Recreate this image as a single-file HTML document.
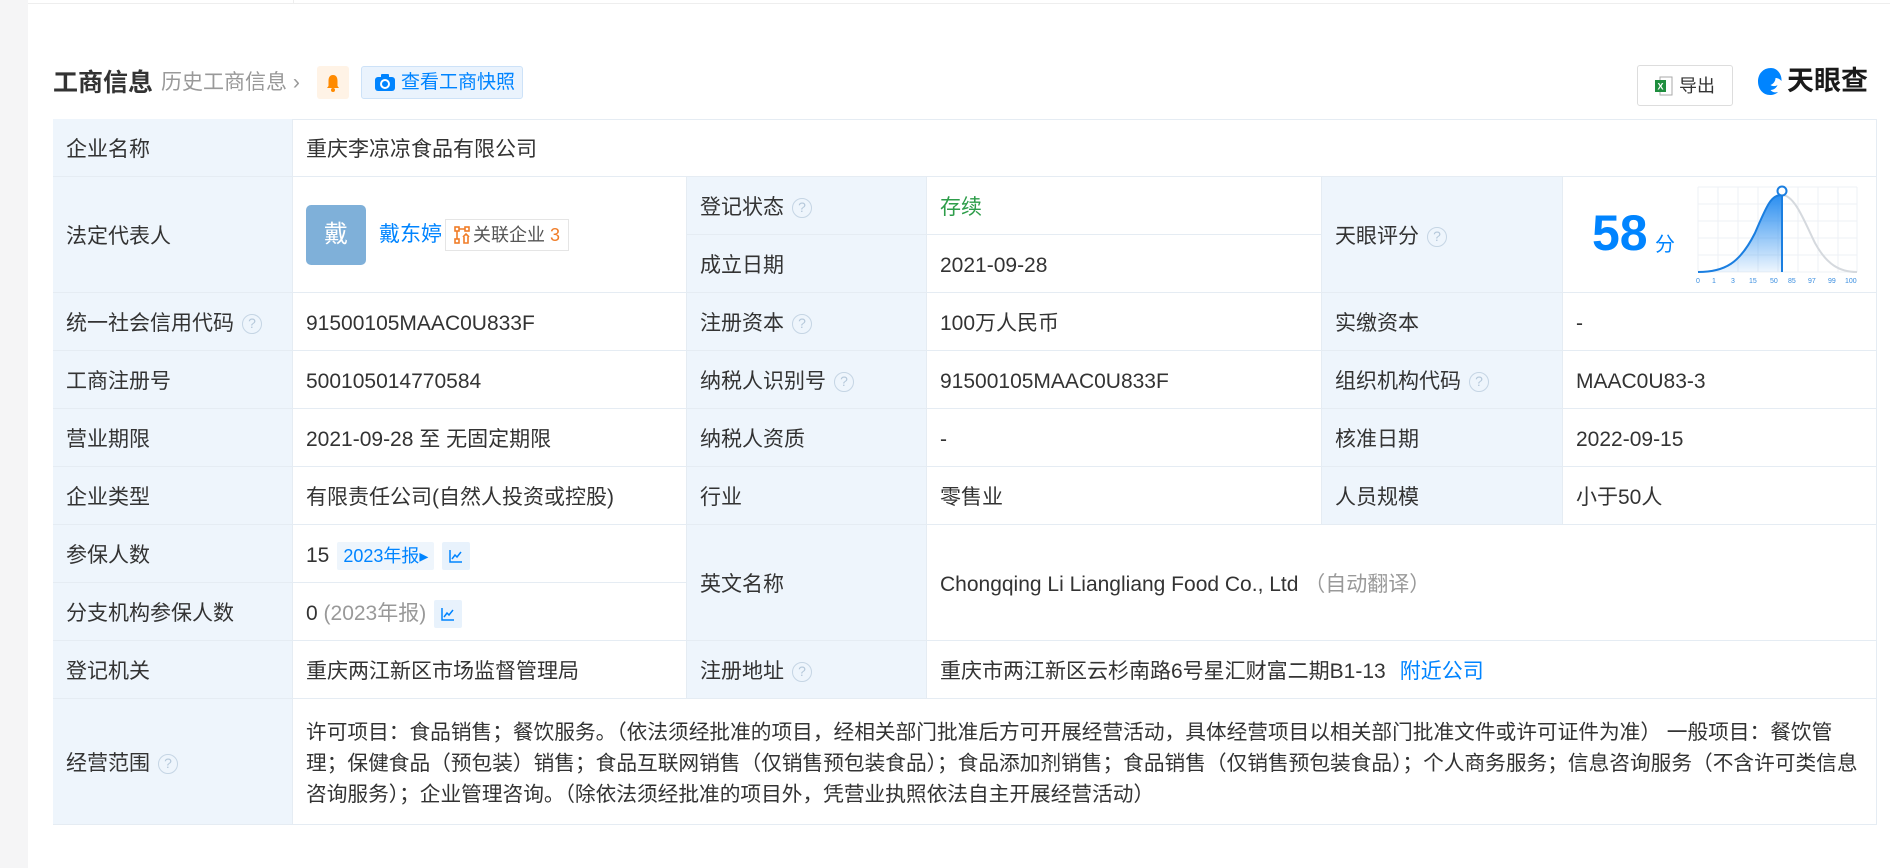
<!DOCTYPE html>
<html><head><meta charset="utf-8"><style>
*{margin:0;padding:0;box-sizing:border-box}
body{width:1890px;height:868px;background:#fff;font-family:"Liberation Sans","Noto Sans CJK SC",sans-serif;color:#333;position:relative;overflow:hidden}
.abs{position:absolute}
.c{position:absolute;border-right:1px solid #e5ecf3;border-bottom:1px solid #e5ecf3;display:flex;align-items:center;padding-left:13px;padding-top:4px;font-size:21px;line-height:26px;color:#333;white-space:nowrap}
.l{background:#eef5fc}
.q{display:inline-block;width:20px;height:20px;border:1.5px solid #c5d5e4;border-radius:50%;color:#b5c8da;font-size:14px;line-height:17px;text-align:center;margin-left:8px}
.blue{color:#0084ff}
.gray{color:#999}
.tag{display:inline-block;background:#eef5fc;color:#0084ff;font-size:18px;line-height:22px;padding:3px 6px;margin-left:8px;border-radius:2px}
.tr{display:inline-flex;align-items:center;justify-content:center;width:28px;height:28px;background:#e8f2fc;margin-left:8px;border-radius:2px}
</style></head><body>
<div class="abs" style="left:0;top:0;width:28px;height:868px;background:#f5f5f6"></div>
<div class="abs" style="left:28px;top:3px;width:1862px;border-top:1px solid #eee"></div>
<div class="abs" style="left:293px;top:0;height:3px;border-left:1px solid #eee"></div>

<div class="abs" style="left:53px;top:66px;font-size:25px;line-height:34px;font-weight:bold;color:#333">工商信息</div>
<div class="abs" style="left:161px;top:68px;font-size:21px;line-height:30px;color:#999">历史工商信息 ›</div>
<div class="abs" style="left:317px;top:66px;width:32px;height:33px;background:#fff3e6;border-radius:3px;display:flex;align-items:center;justify-content:center">
<svg width="14" height="18" viewBox="0 0 14 18"><path d="M7 1C3.5 1 2.5 4 2.5 7v5L1 14h12l-1.5-2V7C11.5 4 10.5 1 7 1z" fill="#ff8a00"/><circle cx="7" cy="16" r="2" fill="#ff8a00"/></svg></div>
<div class="abs" style="left:361px;top:66px;width:162px;height:33px;background:#eaf3fd;border:1px solid #cde2f8;border-radius:3px;display:flex;align-items:center;padding-left:13px;color:#0084ff;font-size:19px;line-height:24px">
<svg width="20" height="17" viewBox="0 0 20 17" style="margin-right:6px"><rect x="0" y="3" width="20" height="14" rx="3" fill="#0084ff"/><rect x="6" y="0" width="8" height="5" rx="1" fill="#0084ff"/><circle cx="10" cy="10" r="4" fill="none" stroke="#fff" stroke-width="2"/></svg>查看工商快照</div>

<div class="abs" style="left:1637px;top:65px;width:96px;height:41px;border:1px solid #ddd;border-radius:3px;display:flex;align-items:center;justify-content:center;font-size:18px;line-height:22px;color:#333">
<svg width="18" height="20" viewBox="0 0 18 20" style="margin-right:6px"><rect x="5" y="1" width="12" height="18" fill="#fff" stroke="#aaa"/><rect x="0" y="4" width="11" height="12" fill="#1e8e3e"/><text x="2.5" y="13.5" font-size="9" fill="#fff" font-family="Liberation Sans" font-weight="bold">X</text></svg>导出</div>
<div class="abs" style="left:1755px;top:64px;display:flex;align-items:center">
<svg width="30" height="32" viewBox="0 0 30 32"><path d="M16 3C8 3 3 9 3 16.5S8 30 15 30c3 0 6-1 8-3-3 1-6 0-7.5-2 3 0 6-2 7-5-2 1.5-5 1.5-7 0 3-1 5-4 5-7 2 0 4.5 1 6 3C27 9 22 3 16 3z" fill="#0084ff"/></svg>
<span style="font-size:27px;line-height:34px;font-weight:bold;color:#1a1a1a;margin-left:2px">天眼查</span></div>

<div class="abs" style="left:53px;top:119px;width:1824px;height:706px;border-top:1px solid #e5ecf3;border-left:1px solid #e5ecf3"></div>

<div class="c l" style="left:53px;top:119px;width:240px;height:58px">企业名称</div>
<div class="c" style="left:293px;top:119px;width:1584px;height:58px">重庆李凉凉食品有限公司</div>

<div class="c l" style="left:53px;top:177px;width:240px;height:116px">法定代表人</div>
<div class="c" style="left:293px;top:177px;width:394px;height:116px;padding-top:0">
<div style="width:60px;height:60px;background:#7fb0d9;border-radius:5px;color:#fff;font-size:24px;display:flex;align-items:center;justify-content:center">戴</div>
<span class="blue" style="margin-left:13px">戴东婷</span>
<span style="margin-left:3px;border:1px solid #e5e5e5;padding:3px 8px;font-size:18px;line-height:24px;color:#555;display:inline-flex;align-items:center"><svg width="16" height="18" viewBox="0 0 16 18" style="margin-right:3px"><g fill="none" stroke="#f07d28" stroke-width="1.6"><rect x="1" y="1" width="4" height="4"/><rect x="11" y="1" width="4" height="4"/><rect x="1" y="13" width="4" height="4"/><path d="M3 5v8M5 3h6M9 11l3-3 3 3M10 11v6h4v-6"/></g></svg>关联企业 <span style="color:#f07d28;margin-left:5px">3</span></span></div>
<div class="c l" style="left:687px;top:177px;width:240px;height:58px">登记状态<span class="q">?</span></div>
<div class="c" style="left:927px;top:177px;width:395px;height:58px;color:#2e9d4a">存续</div>
<div class="c l" style="left:687px;top:235px;width:240px;height:58px">成立日期</div>
<div class="c" style="left:927px;top:235px;width:395px;height:58px">2021-09-28</div>
<div class="c l" style="left:1322px;top:177px;width:241px;height:116px">天眼评分<span class="q">?</span></div>
<div class="c" style="left:1563px;top:177px;width:314px;height:116px"></div>
<div class="abs" style="left:1592px;top:205px;font-size:50px;font-weight:bold;color:#0084ff;line-height:56px">58</div>
<div class="abs" style="left:1655px;top:232px;font-size:20px;line-height:26px;color:#0084ff">分</div>
<svg class="abs" style="left:1695px;top:183px" width="175" height="105" viewBox="0 0 175 105">
<g stroke="#eef1f5" stroke-width="1"><path d="M3 4h159M3 21h159M3 38h159M3 55h159M3 72h159M3 89h159M3 4v85M23 4v85M43 4v85M63 4v85M83 4v85M103 4v85M123 4v85M143 4v85M162 4v85"/></g>
<defs><linearGradient id="g" x1="0" y1="0" x2="0" y2="1"><stop offset="0" stop-color="#2a8ef0"/><stop offset="1" stop-color="#2a8ef0" stop-opacity="0.08"/></linearGradient></defs>
<path d="M3 89C30 89 45 80 60 50 72 22 76 12 87 12V89Z" fill="url(#g)"/>
<path d="M3 89C30 89 45 80 60 50 72 22 76 12 87 12" fill="none" stroke="#1a7ee0" stroke-width="2"/>
<path d="M87 12C100 12 110 40 120 60 132 82 145 89 162 89" fill="none" stroke="#d5d9de" stroke-width="2"/>
<path d="M87 10V89" stroke="#1a7ee0" stroke-width="2"/>
<circle cx="87" cy="8" r="4.5" fill="#fff" stroke="#1a7ee0" stroke-width="2"/>
<g font-size="7" fill="#3a8ee0" font-family="Liberation Sans"><text x="1" y="100">0</text><text x="17" y="100">1</text><text x="36" y="100">3</text><text x="54" y="100">15</text><text x="75" y="100">50</text><text x="93" y="100">85</text><text x="113" y="100">97</text><text x="133" y="100">99</text><text x="150" y="100">100</text></g>
</svg>

<div class="c l" style="left:53px;top:293px;width:240px;height:58px">统一社会信用代码<span class="q">?</span></div>
<div class="c" style="left:293px;top:293px;width:394px;height:58px">91500105MAAC0U833F</div>
<div class="c l" style="left:687px;top:293px;width:240px;height:58px">注册资本<span class="q">?</span></div>
<div class="c" style="left:927px;top:293px;width:395px;height:58px">100万人民币</div>
<div class="c l" style="left:1322px;top:293px;width:241px;height:58px">实缴资本</div>
<div class="c" style="left:1563px;top:293px;width:314px;height:58px">-</div>

<div class="c l" style="left:53px;top:351px;width:240px;height:58px">工商注册号</div>
<div class="c" style="left:293px;top:351px;width:394px;height:58px">500105014770584</div>
<div class="c l" style="left:687px;top:351px;width:240px;height:58px">纳税人识别号<span class="q">?</span></div>
<div class="c" style="left:927px;top:351px;width:395px;height:58px">91500105MAAC0U833F</div>
<div class="c l" style="left:1322px;top:351px;width:241px;height:58px">组织机构代码<span class="q">?</span></div>
<div class="c" style="left:1563px;top:351px;width:314px;height:58px">MAAC0U83-3</div>

<div class="c l" style="left:53px;top:409px;width:240px;height:58px">营业期限</div>
<div class="c" style="left:293px;top:409px;width:394px;height:58px">2021-09-28 至 无固定期限</div>
<div class="c l" style="left:687px;top:409px;width:240px;height:58px">纳税人资质</div>
<div class="c" style="left:927px;top:409px;width:395px;height:58px">-</div>
<div class="c l" style="left:1322px;top:409px;width:241px;height:58px">核准日期</div>
<div class="c" style="left:1563px;top:409px;width:314px;height:58px">2022-09-15</div>

<div class="c l" style="left:53px;top:467px;width:240px;height:58px">企业类型</div>
<div class="c" style="left:293px;top:467px;width:394px;height:58px">有限责任公司(自然人投资或控股)</div>
<div class="c l" style="left:687px;top:467px;width:240px;height:58px">行业</div>
<div class="c" style="left:927px;top:467px;width:395px;height:58px">零售业</div>
<div class="c l" style="left:1322px;top:467px;width:241px;height:58px">人员规模</div>
<div class="c" style="left:1563px;top:467px;width:314px;height:58px">小于50人</div>

<div class="c l" style="left:53px;top:525px;width:240px;height:58px">参保人数</div>
<div class="c" style="left:293px;top:525px;width:394px;height:58px">15<span class="tag">2023年报▸</span><span class="tr"><svg width="16" height="16" viewBox="0 0 16 16" fill="none" stroke="#0084ff" stroke-width="1.5"><path d="M2 2v12h12M4 11l3-4 2 2 4-5"/></svg></span></div>
<div class="c l" style="left:53px;top:583px;width:240px;height:58px">分支机构参保人数</div>
<div class="c" style="left:293px;top:583px;width:394px;height:58px">0&nbsp;<span class="gray">(2023年报)</span><span class="tr"><svg width="16" height="16" viewBox="0 0 16 16" fill="none" stroke="#0084ff" stroke-width="1.5"><path d="M2 2v12h12M4 11l3-4 2 2 4-5"/></svg></span></div>
<div class="c l" style="left:687px;top:525px;width:240px;height:116px">英文名称</div>
<div class="c" style="left:927px;top:525px;width:950px;height:116px">Chongqing Li Liangliang Food Co., Ltd&nbsp;<span class="gray">（自动翻译）</span></div>

<div class="c l" style="left:53px;top:641px;width:240px;height:58px">登记机关</div>
<div class="c" style="left:293px;top:641px;width:394px;height:58px">重庆两江新区市场监督管理局</div>
<div class="c l" style="left:687px;top:641px;width:240px;height:58px">注册地址<span class="q">?</span></div>
<div class="c" style="left:927px;top:641px;width:950px;height:58px">重庆市两江新区云杉南路6号星汇财富二期B1-13<span class="blue" style="margin-left:14px">附近公司</span></div>

<div class="c l" style="left:53px;top:699px;width:240px;height:126px">经营范围<span class="q">?</span></div>
<div class="c" style="left:293px;top:699px;width:1584px;height:126px;white-space:normal;padding-right:14px;font-size:20.7px;line-height:31px">许可项目：食品销售；餐饮服务。（依法须经批准的项目，经相关部门批准后方可开展经营活动，具体经营项目以相关部门批准文件或许可证件为准） 一般项目：餐饮管理；保健食品（预包装）销售；食品互联网销售（仅销售预包装食品）；食品添加剂销售；食品销售（仅销售预包装食品）；个人商务服务；信息咨询服务（不含许可类信息咨询服务）；企业管理咨询。（除依法须经批准的项目外，凭营业执照依法自主开展经营活动）</div>
</body></html>
